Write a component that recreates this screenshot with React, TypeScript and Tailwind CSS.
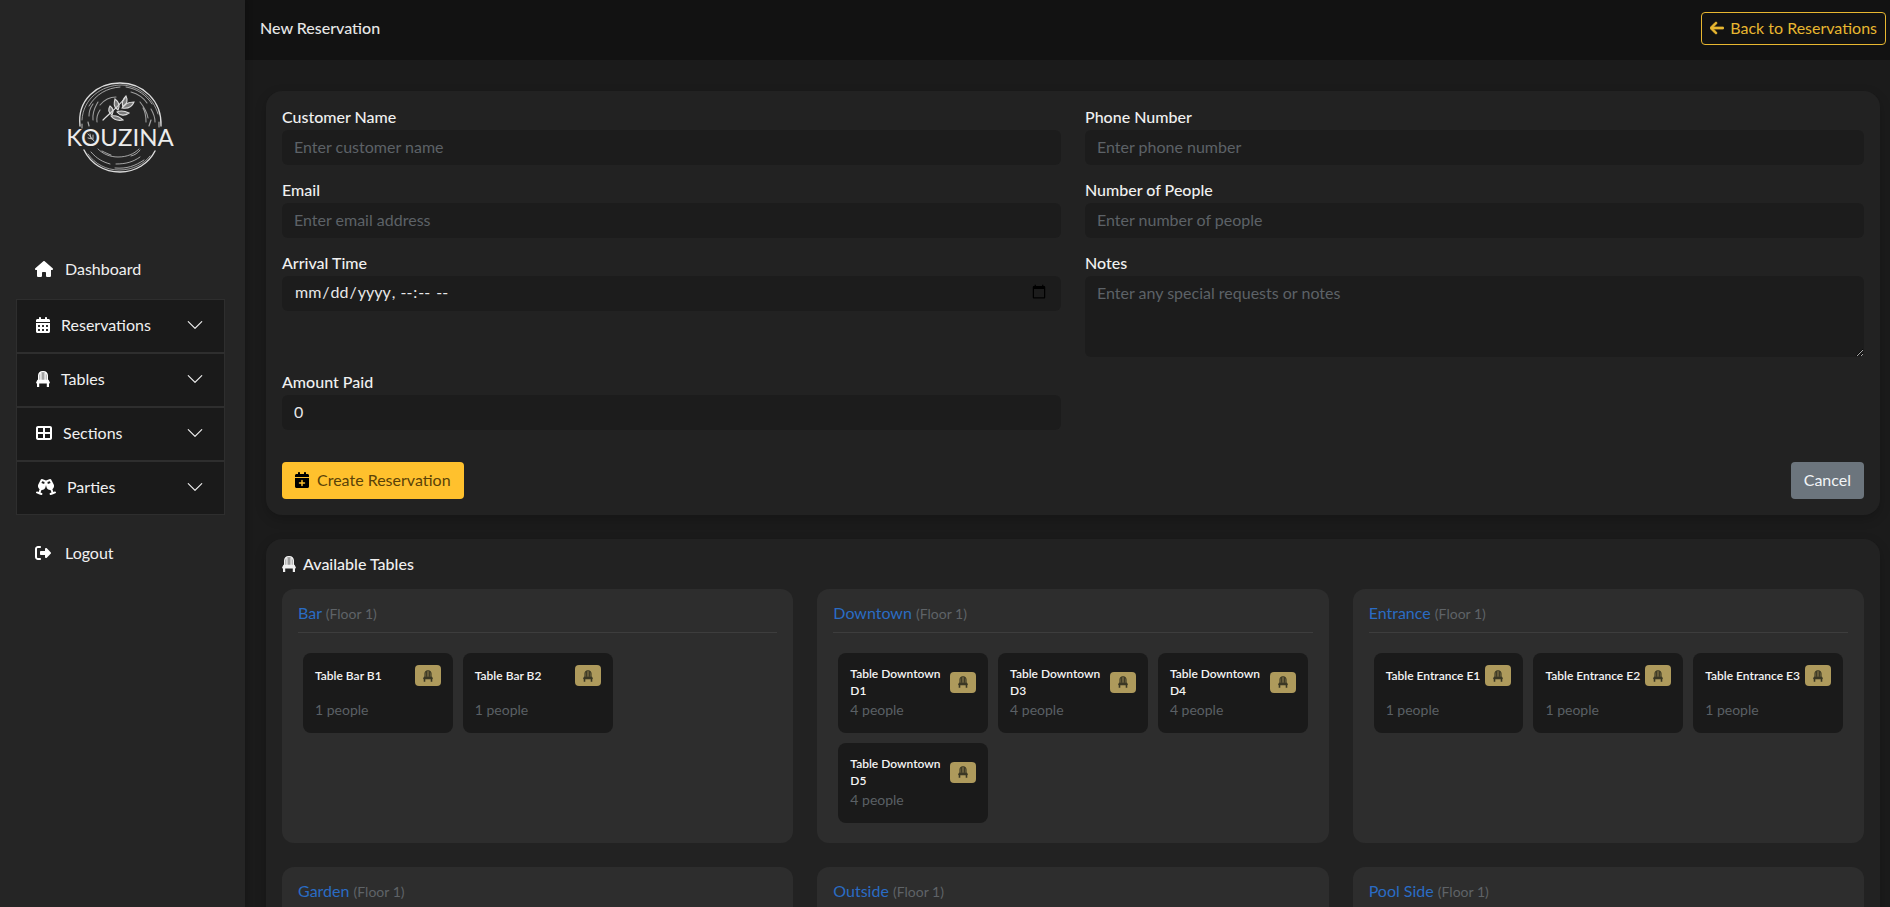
import type { ReactNode } from "react";
import type { IconType } from "react-icons";
import {
  FaArrowLeft,
  FaCalendarDays,
  FaCalendarPlus,
  FaChampagneGlasses,
  FaHouse,
  FaRightFromBracket,
  FaTableCellsLarge,
} from "react-icons/fa6";
import { BsChevronDown } from "react-icons/bs";

// solid-backed chair with faint slats
function Chair({ className }: { className?: string }) {
  return (
    <svg viewBox="0 0 14 16" className={className} fill="currentColor" aria-hidden="true">
      <path d="M2 9V4.5C2 2 4 0 6.500 0h1C10 0 12 2 12 4.500V9h-1.300V4.500L9.700 2v7H8.500V1.300h-3V9H4.300V2l-1 2.500V9z" />
      <path d="M3 9V4.500C3 2.500 5 1 7 1s4 1.500 4 3.500V9z" opacity=".6" />
      <path d="M1.500 8.800h11l1.300 2.400c.2.500-.1 1.300-.8 1.300v3.500h-2.200v-3.500H3.200V16H1v-3.500c-.7 0-1-.8-.8-1.300z" />
    </svg>
  );
}

const menu: { label: string; icon: IconType | typeof Chair; size: string }[] = [
  { label: "Reservations", icon: FaCalendarDays, size: "h-4 w-[14px]" },
  { label: "Tables", icon: Chair, size: "h-4 w-[14px]" },
  { label: "Sections", icon: FaTableCellsLarge, size: "h-4 w-4" },
  { label: "Parties", icon: FaChampagneGlasses, size: "h-4 w-5" },
];

const sections: { name: string; floor: number; seats: number; tables: string[] }[] = [
  { name: "Bar", floor: 1, seats: 1, tables: ["B1", "B2"] },
  { name: "Downtown", floor: 1, seats: 4, tables: ["D1", "D3", "D4", "D5"] },
  { name: "Entrance", floor: 1, seats: 1, tables: ["E1", "E2", "E3"] },
  { name: "Garden", floor: 1, seats: 4, tables: [] },
  { name: "Outside", floor: 1, seats: 4, tables: [] },
  { name: "Pool Side", floor: 1, seats: 2, tables: [] },
];

const field =
  "block w-full rounded-md bg-[#1c1c1c] px-3 pb-[3px] text-base text-[#e8e8e8] outline-none placeholder:text-[#5d6267]";

function Logo() {
  return (
    <svg viewBox="0 0 120 100" className="h-[100px] w-[120px]" fill="none" stroke="#dcdcdc" strokeLinecap="round" role="img" aria-label="Kouzina">
      {/* upper half of the brushed ring */}
      <path d="M20 48C17 22 37 5 60 5s42 18 41 43" strokeWidth="1.3" />
      <path d="M22 42C23 21 41 7 62 7c17 1 31 12 36 29" strokeWidth=".8" opacity=".8" />
      <path d="M29 28C36 16 47 10 60 9M66 9c12 2 20 8 26 17" strokeWidth="1" opacity=".7" />
      <path d="M33 42c-1-9 3-14 5-18M37 44c-1-6 1-9 3-12M29 38c0-5 1-8 4-12" strokeWidth="1.1" opacity=".65" />
      <path d="M40 27c5-6 10-8 16-8M71 14c7 2 12 5 16 11M80 24c4 5 7 9 8 16M83 30c3 5 3 9 3 14M91 31c3 5 4 8 4 13" strokeWidth="1.1" opacity=".65" />
      <path d="M22 46v4M28 44l1 4M91 42l-2 6M99 44v5" strokeWidth="1.2" opacity=".7" />
      {/* lower half */}
      <path d="M24 72c7 14 20 22 36 22s29-9 35-21" strokeWidth="1.4" />
      <path d="M28 76c7 10 18 16 31 16 14 0 25-6 31-14" strokeWidth=".8" opacity=".8" />
      <path d="M31 74c6 7 12 10 19 12M55 90c12 1 20-2 29-8M38 71c5 5 12 8 20 8 9 0 16-3 21-8M42 73c4 2 6 3 9 4M56 86c10 0 17-2 24-7M71 78c4-1 7-3 9-6" strokeWidth="1" opacity=".7" />
      {/* olive branch */}
      <path d="M43 42c7-7 15-13 22-22" strokeWidth="1.2" />
      <g fill="#cfcfcf" fillOpacity=".5" strokeWidth="1.1">
        <path d="M63 29c-2-5 0-8 3-11 2 4 1 8-3 11z" />
        <path d="M58 32c-5-3-4-7-3-11 4 3 5 7 3 11z" />
        <path d="M52 37c-4-3-4-6-2-9 3 2 4 5 2 9z" />
        <path d="M62 30c3-5 7-6 12-6-2 5-6 7-12 6z" />
        <path d="M57 34c4-2 8-1 12 1-4 3-9 3-12-1z" />
        <path d="M51 38c5-1 9 1 12 4-5 1-9 0-12-4z" />
      </g>
      {/* small sprig inside the O */}
      <path d="M28 56l6 7M30 56l1 4M33 57v4M28 60l4 1" strokeWidth=".8" />
      <text x="60" y="68" textAnchor="middle" fill="#ececec" stroke="none" fontSize="24" fontWeight="400" fontFamily="Lato, sans-serif">
        KOUZINA
      </text>
    </svg>
  );
}

function Sidebar() {
  return (
    <aside className="z-10 w-[245px] shrink-0 bg-[#252525] px-4 text-[#f0f0f0] shadow-[2px_0_6px_rgba(0,0,0,0.2)]">
      <a href="#home" className="flex h-[246px] items-center justify-center pt-[10px] pr-[6px]">
        <Logo />
      </a>
      <nav>
        <a href="#dashboard" className="flex h-[46px] items-center pl-[19px]">
          <FaHouse className="h-4 w-[18px] text-white" />
          <span className="pl-3">Dashboard</span>
        </a>
        <div className="mt-[7px] mr-1 bg-[#1a1a1a]">
          {menu.map(({ label, icon: Icon, size }) => (
            <button key={label} type="button" className="flex h-[54px] w-full items-center border border-[#2e2e2e] pr-5 pb-[2px] pl-[19px]">
              <Icon className={`${size} text-white`} />
              <span className="pl-[11px]">{label}</span>
              <BsChevronDown className="ml-auto h-[18px] w-[18px]" />
            </button>
          ))}
        </div>
        <a href="#logout" className="mt-[15px] flex h-[46px] items-center pl-[19px]">
          <FaRightFromBracket className="h-4 w-4 text-white" />
          <span className="pl-[14px]">Logout</span>
        </a>
      </nav>
    </aside>
  );
}

function Field({ id, label, children }: { id: string; label: string; children: ReactNode }) {
  return (
    <div>
      <label htmlFor={id} className="block pb-[3px] leading-5 font-medium text-[#f0f0f0]">
        {label}
      </label>
      {children}
    </div>
  );
}

function ReservationForm() {
  return (
    <form className="rounded-2xl bg-[#222222] p-4 shadow-[0_4px_12px_rgba(0,0,0,0.2)]">
      <div className="grid grid-cols-2 gap-x-6 gap-y-[15px]">
        <Field id="name" label="Customer Name">
          <input id="name" type="text" placeholder="Enter customer name" className={`${field} h-[35px]`} />
        </Field>
        <Field id="phone" label="Phone Number">
          <input id="phone" type="tel" placeholder="Enter phone number" className={`${field} h-[35px]`} />
        </Field>
        <Field id="email" label="Email">
          <input id="email" type="email" placeholder="Enter email address" className={`${field} h-[35px]`} />
        </Field>
        <Field id="people" label="Number of People">
          <input id="people" type="number" placeholder="Enter number of people" className={`${field} h-[35px]`} />
        </Field>
        <Field id="arrival" label="Arrival Time">
          <input id="arrival" type="datetime-local" className={`${field} h-[35px]`} />
        </Field>
        <Field id="notes" label="Notes">
          <textarea id="notes" placeholder="Enter any special requests or notes" className={`${field} h-[81px] resize pt-[5px]`} />
        </Field>
        <Field id="amount" label="Amount Paid">
          <input id="amount" type="number" defaultValue={0} className={`${field} h-[35px]`} />
        </Field>
      </div>
      <div className="mt-8 flex justify-between">
        <button type="submit" className="flex h-[37px] items-center gap-2 rounded bg-[#ffc12d] px-[13px] pb-[2px] text-[#5a4208]">
          <FaCalendarPlus className="h-4 w-[14px] text-black" />
          Create Reservation
        </button>
        <button type="button" className="h-[37px] rounded bg-[#6c757d] px-[13px] pb-[2px] text-[#f2f4f6]">
          Cancel
        </button>
      </div>
    </form>
  );
}

function TableCard({ name, seats }: { name: string; seats: number }) {
  return (
    <div className="flex h-20 flex-col justify-between rounded-lg bg-[#1a1a1a] px-3 pt-3 pb-[13px]">
      <div className="flex items-center justify-between">
        <h4 className="text-xs leading-[17px] font-semibold text-[#f4f4f4]">{name}</h4>
        <span className="flex h-[21px] w-[26px] shrink-0 items-center justify-center rounded bg-[#ae9a5c]">
          <Chair className="h-3 w-[10px] text-[#3a3724]" />
        </span>
      </div>
      <p className="text-sm text-[#5b6065]">{seats} people</p>
    </div>
  );
}

function AvailableTables() {
  return (
    <section className="mt-6 rounded-2xl bg-[#222222] p-4 pt-3 shadow-[0_4px_12px_rgba(0,0,0,0.2)]">
      <h2 className="flex h-[26px] items-center gap-[7px] font-medium text-[#f0f0f0]">
        <Chair className="h-4 w-[14px]" />
        Available Tables
      </h2>
      <div className="mt-3 grid auto-rows-fr grid-cols-3 gap-6">
        {sections.map((section) => (
          <div key={section.name} className="rounded-xl bg-[#2d2d2d] px-4 pt-3 pb-5">
            <h3 className="border-b border-[#3d3d3d] pb-[7px] text-[#2a6cc4]">
              {section.name} <small className="text-sm text-[#5f6367]">(Floor {section.floor})</small>
            </h3>
            <div className="mt-5 grid grid-cols-3 gap-[10px] px-[5px]">
              {section.tables.map((table) => (
                <TableCard key={table} name={`Table ${section.name} ${table}`} seats={section.seats} />
              ))}
            </div>
          </div>
        ))}
      </div>
    </section>
  );
}

export default function App() {
  return (
    <div className="flex h-screen overflow-hidden bg-[#1b1b1b] font-['Lato',sans-serif] text-base">
      <Sidebar />
      <div className="flex min-w-0 flex-1 flex-col">
        <header className="flex h-[60px] shrink-0 items-start justify-between bg-[#121212] pt-3 pr-1 pl-[15px]">
          <h1 className="leading-8 font-medium text-[#e6e6e6]">New Reservation</h1>
          <a href="#reservations" className="flex h-[33px] items-center gap-[6px] rounded-sm border border-[#e8b730] px-2 pb-[2px] text-[#e8b730]">
            <FaArrowLeft className="h-4 w-[14px] stroke-current stroke-[24]" />
            Back to Reservations
          </a>
        </header>
        <main className="min-h-0 flex-1 overflow-y-auto pt-[31px] pr-[10px] pb-6 pl-[21px] [scrollbar-width:none]">
          <ReservationForm />
          <AvailableTables />
        </main>
      </div>
    </div>
  );
}
